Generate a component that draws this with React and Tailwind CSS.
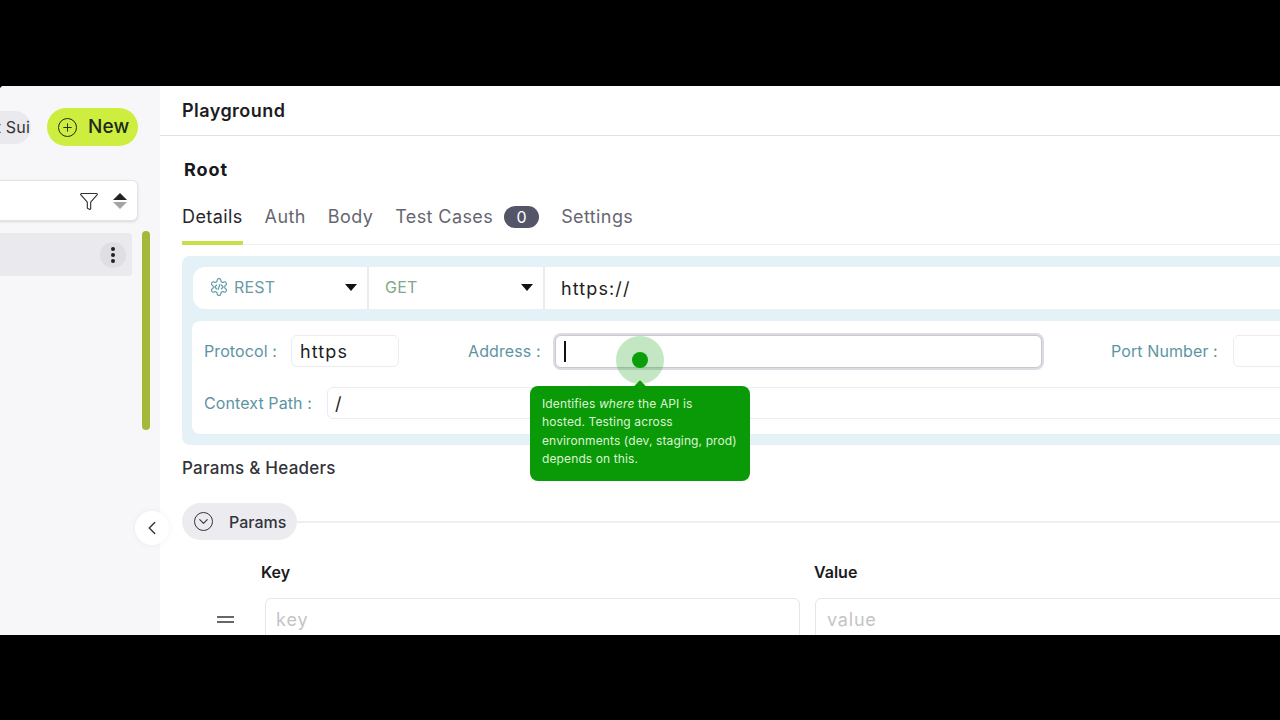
import React from "react";
import { ChevronDown, ChevronLeft, Funnel, Plus } from "lucide-react";

function Caret() {
  return <span className="w-0 h-0 border-x-[6px] border-x-transparent border-t-[7px] border-t-[#111]" />;
}

function CodeGear() {
  return (
    <svg width="20" height="20" viewBox="0 0 24 24" fill="none" stroke="#5f9aa6" strokeWidth="1.4" strokeLinejoin="round" strokeLinecap="round">
      <path d="M12.22 2h-.44a2 2 0 0 0-2 2v.18a2 2 0 0 1-1 1.73l-.43.25a2 2 0 0 1-2 0l-.15-.08a2 2 0 0 0-2.73.73l-.22.38a2 2 0 0 0 .73 2.73l.15.1a2 2 0 0 1 1 1.72v.51a2 2 0 0 1-1 1.74l-.15.09a2 2 0 0 0-.73 2.73l.22.38a2 2 0 0 0 2.73.73l.15-.08a2 2 0 0 1 2 0l.43.25a2 2 0 0 1 1 1.73V20a2 2 0 0 0 2 2h.44a2 2 0 0 0 2-2v-.18a2 2 0 0 1 1-1.73l.43-.25a2 2 0 0 1 2 0l.15.08a2 2 0 0 0 2.73-.73l.22-.39a2 2 0 0 0-.73-2.73l-.15-.08a2 2 0 0 1-1-1.74v-.5a2 2 0 0 1 1-1.74l.15-.09a2 2 0 0 0 .73-2.73l-.22-.38a2 2 0 0 0-2.73-.73l-.15.08a2 2 0 0 1-2 0l-.43-.25a2 2 0 0 1-1-1.73V4a2 2 0 0 0-2-2z" />
      <path d="M9.2 9.6 7 12l2.2 2.4M14.8 9.6 17 12l-2.2 2.4M13 9l-2 6" />
    </svg>
  );
}

export default function App() {
  return (
    <div className="w-[1280px] h-[720px] bg-black flex flex-col overflow-hidden font-['Inter',sans-serif]">
      <div className="h-[86px] shrink-0" />
      <div className="relative h-[549px] shrink-0 flex bg-white overflow-hidden rounded-tl-[4px]">
        <aside className="w-[160px] shrink-0 bg-[#f7f7fa] flex flex-col overflow-hidden">
          <div className="flex justify-end items-center gap-[16px] pr-[22px] mt-[22px] h-[38px]">
            <div className="h-[33px] shrink-0 w-[70px] rounded-full bg-[#e9e9ee] flex items-center justify-end pr-[1px] text-[16px] tracking-[0.2px] text-[#333] whitespace-nowrap">Test Sui</div>
            <button className="w-[91px] h-[38px] shrink-0 rounded-full bg-[#cdee3f] flex items-center gap-[11px] pl-[11px] text-[19px] font-medium tracking-[0.1px] text-[#1d2a1d]">
              <span className="w-[19px] h-[19px] rounded-full border-[1.5px] border-[#1d2a1d] flex items-center justify-center">
                <Plus size={13} strokeWidth={1.75} />
              </span>
              New
            </button>
          </div>
          <div className="flex mt-[34px] ml-[-10px] w-[148px] h-[41px] rounded-md bg-white border border-[#e4e4e8] shadow-sm items-center justify-end gap-[14px] pr-[10px]">
            <Funnel size={20} strokeWidth={1.4} className="text-[#333]" />
            <span className="flex flex-col gap-[2px] items-center">
              <span className="w-0 h-0 border-x-[7px] border-x-transparent border-b-[7px] border-b-[#222]" />
              <span className="w-0 h-0 border-x-[7px] border-x-transparent border-t-[7px] border-t-[#a4a4a8]" />
            </span>
          </div>
          <div className="flex mt-[10px] items-start">
            <div className="w-[132px] h-[43px] mt-[2px] bg-[#e9e9ee] rounded-r-sm flex items-center justify-end pr-[6px]">
              <span className="w-[26px] h-[26px] rounded-full bg-[#dedee3] flex flex-col items-center justify-center gap-[2px]">
                <span className="w-[4px] h-[4px] rounded-full bg-[#222]" />
                <span className="w-[4px] h-[4px] rounded-full bg-[#222]" />
                <span className="w-[4px] h-[4px] rounded-full bg-[#222]" />
              </span>
            </div>
            <div className="w-[8px] h-[199px] ml-[10px] rounded-full bg-[#a2b93a]" />
          </div>
        </aside>

        <main className="flex-1 min-w-0 flex flex-col overflow-hidden">
          <div className="h-[50px] shrink-0 border-b border-[#e2e2e6] flex items-center pl-[22px] text-[18px] tracking-[0.45px] font-semibold text-[#1c1c22]">Playground</div>
          <div className="pl-[24px] mt-[21px] text-[18px] leading-[26px] tracking-[0.9px] font-bold text-[#17171c]">Root</div>
          <div className="mt-[21px] ml-[22px] h-[41px] border-b border-[#f0f0f2] flex items-start gap-[22px] text-[18px] leading-[26px] tracking-[0.4px] text-[#666670]">
            <div className="h-[41px] border-b-[4px] border-[#c6e04a] text-[#26262c] rounded-b-[1px]">Details</div>
            <div>Auth</div>
            <div>Body</div>
            <div className="flex items-center gap-[11px]">
              Test Cases
              <span className="w-[35px] h-[22px] rounded-full bg-[#55556a] text-white text-[16px] leading-[22px] text-center">0</span>
            </div>
            <div>Settings</div>
          </div>

          <div className="mt-[11px] ml-[22px] w-[1200px] h-[189px] shrink-0 rounded-l-lg bg-[#e4f1f6] pl-[11px] pt-[11px] flex flex-col">
            <div className="h-[42px] bg-white rounded-l-xl flex items-stretch">
              <div className="w-[176px] border-r-[2px] border-[#e6eef1] flex items-center pl-[16px] pr-[10px] text-[16px] tracking-[0.2px] text-[#6c9aa5] pb-[2px]">
                <CodeGear />
                <span className="ml-[5px] flex-1">REST</span>
                <Caret />
              </div>
              <div className="w-[176px] border-r-[2px] border-[#e6eef1] flex items-center justify-between pl-[16px] pr-[10px] text-[16px] tracking-[0.2px] text-[#7fa98a] pb-[2px]">
                GET
                <Caret />
              </div>
              <div className="flex items-center pl-[16px] text-[18px] text-[#1e1e24] tracking-[1.1px]">https://</div>
            </div>
            <div className="mt-[12px] -ml-[1px] h-[113px] bg-white rounded-l-lg pl-[12px] flex flex-col">
              <div className="flex items-center mt-[13px] h-[34px] text-[16px] tracking-[0.1px] text-[#5c95a2]">
                <span className="w-[87px]">Protocol :</span>
                <div className="w-[108px] h-[32px] rounded-md border border-[#ececf0] flex items-center pl-[8px] text-[18px] text-[#1e1e24] tracking-[1.1px]">https</div>
                <span className="ml-[69px] w-[87px]">Address :</span>
                <div className="w-[487px] h-[33px] rounded-md bg-white border border-[#c9c7d0] shadow-[0_0_0_2px_#dedce2] flex items-center pl-[8px]">
                  <span className="w-[2px] h-[21px] bg-[#111]" />
                </div>
                <span className="ml-[69px] w-[122px] whitespace-nowrap">Port Number :</span>
                <div className="w-[100px] h-[32px] rounded-md border border-[#ececf0]" />
              </div>
              <div className="flex items-center mt-[19px] h-[32px] text-[16px] tracking-[0.1px] text-[#5c95a2]">
                <span className="w-[123px] whitespace-nowrap">Context Path :</span>
                <div className="flex-1 h-[32px] rounded-l-md border border-[#ececf0] flex items-center pl-[7px] text-[18px] text-[#1e1e24]">/</div>
              </div>
            </div>
          </div>

          <div className="ml-[22px] mt-[11px] text-[17px] leading-[24px] tracking-[0.25px] font-medium text-[#33333a]">Params &amp; Headers</div>
          <div className="ml-[22px] mt-[23px] flex items-center">
            <div className="w-[115px] h-[37px] rounded-full bg-[#ebebf0] flex items-center pl-[12px] gap-[16px] text-[16px] font-medium text-[#33333a]">
              <span className="w-[19px] h-[19px] rounded-full border-[1.5px] border-[#33333a] flex items-center justify-center">
                <ChevronDown size={15} strokeWidth={1.75} />
              </span>
              Params
            </div>
            <div className="flex-1 h-[2px] bg-[#efeff1]" />
          </div>
          <div className="flex mt-[20px] ml-[56px]">
            <div className="w-[40px] shrink-0" />
            <div className="w-[554px] shrink-0 pl-[5px] text-[16px] leading-[24px] font-semibold text-[#1a1a20]">Key</div>
            <div className="pl-[4px] text-[16px] leading-[24px] font-semibold text-[#1a1a20]">Value</div>
          </div>
          <div className="flex mt-[14px] ml-[56px] items-start">
            <div className="w-[49px] shrink-0 h-[42px] flex flex-col items-end pr-[31px] justify-center gap-[3px]">
              <span className="w-[17px] h-[2px] bg-[#666]" />
              <span className="w-[17px] h-[2px] bg-[#666]" />
            </div>
            <div className="w-[535px] shrink-0 h-[44px] rounded-md border border-[#e6e6ea] pl-[10px] pt-[8px] text-[18px] leading-[26px] tracking-[1px] text-[#c4c4c8]">key</div>
            <div className="w-[500px] shrink-0 ml-[15px] h-[44px] rounded-md border border-[#e6e6ea] pl-[11px] pt-[8px] text-[18px] leading-[26px] tracking-[0.8px] text-[#c4c4c8]">value</div>
          </div>
        </main>

        <button className="absolute left-[135px] top-[425px] w-[34px] h-[34px] rounded-full bg-white shadow-[0_0_6px_rgba(0,0,0,0.06)] flex items-center justify-center text-[#333]">
          <ChevronLeft size={22} strokeWidth={1.5} />
        </button>

        <div className="absolute left-[616px] top-[250px] w-[48px] h-[48px] rounded-full bg-[#0a9e0a]/25 flex items-center justify-center">
          <span className="w-[16px] h-[16px] rounded-full bg-[#0a9e0a]" />
        </div>
        <div className="absolute left-[530px] top-[300px] w-[220px] h-[95px] rounded-lg bg-[#0a9a08] pl-[12px] pt-[9px] text-[12px] leading-[18.4px] tracking-[0.12px] text-[#dcf5d4]">
          <span className="absolute left-[106px] top-[-4px] w-[8px] h-[8px] rotate-45 bg-[#0a9a08]" />
          Identifies <em>where</em> the API is<br />hosted. Testing across<br />environments (dev, staging, prod)<br />depends on this.
        </div>
      </div>
      <div className="flex-1" />
    </div>
  );
}
